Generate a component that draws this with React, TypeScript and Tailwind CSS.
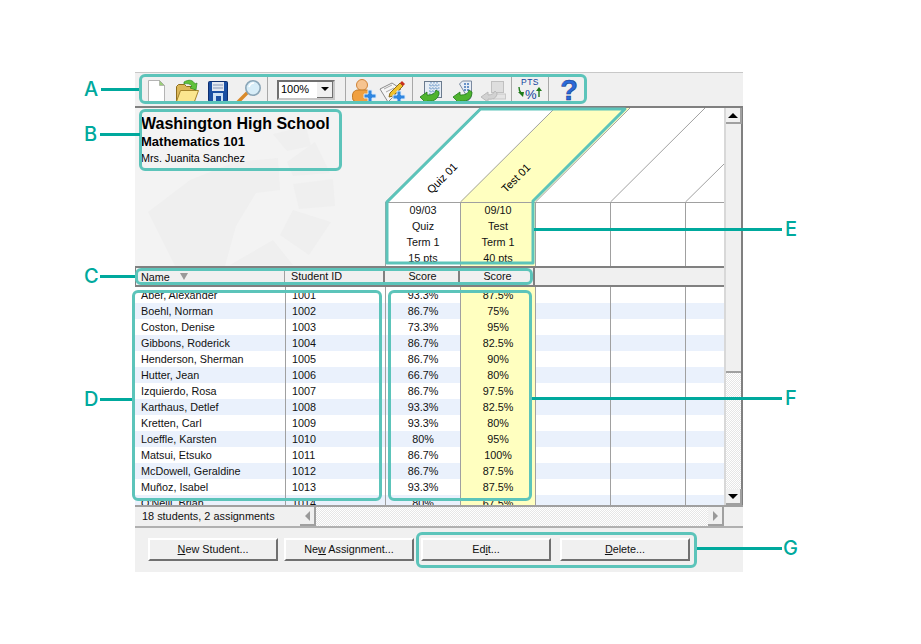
import React from "react";

const students = [
  ["Aber, Alexander", "1001", "93.3%", "87.5%"],
  ["Boehl, Norman", "1002", "86.7%", "75%"],
  ["Coston, Denise", "1003", "73.3%", "95%"],
  ["Gibbons, Roderick", "1004", "86.7%", "82.5%"],
  ["Henderson, Sherman", "1005", "86.7%", "90%"],
  ["Hutter, Jean", "1006", "66.7%", "80%"],
  ["Izquierdo, Rosa", "1007", "86.7%", "97.5%"],
  ["Karthaus, Detlef", "1008", "93.3%", "82.5%"],
  ["Kretten, Carl", "1009", "93.3%", "80%"],
  ["Loeffle, Karsten", "1010", "80%", "95%"],
  ["Matsui, Etsuko", "1011", "86.7%", "100%"],
  ["McDowell, Geraldine", "1012", "86.7%", "87.5%"],
  ["Muñoz, Isabel", "1013", "93.3%", "87.5%"],
  ["O'Neill, Brian", "1014", "80%", "67.5%"],
];

function Sep() {
  return <div className="h-[28px] w-[2px] shrink-0 border-l border-[#a8a8a8]" />;
}

function IconSlot({ w, children }: { w: number; children: React.ReactNode }) {
  return (
    <svg width={w} height={28} viewBox={`0 0 ${w} 28`} className="shrink-0">
      {children}
    </svg>
  );
}

function Plus({ x, y }: { x: number; y: number }) {
  return (
    <path
      d={`M${x - 2} ${y - 6}h4v4h4v4h-4v4h-4v-4h-4v-4h4z`}
      fill="#2f86e0"
      stroke="#dcebfa"
      strokeWidth="1"
    />
  );
}

function GreenArrow({ x, y }: { x: number; y: number }) {
  return (
    <g transform={`translate(${x} ${y})`}>
      <path
        d="M0 7l7-5v3c5 0 8-1 9-5l3 2c0 6-4 10-12 9v3z"
        fill="#4fb32e"
        stroke="#1f7a1a"
        strokeWidth="0.8"
      />
    </g>
  );
}

function Toolbar() {
  return (
    <div className="flex h-[34px] items-center border-t border-[#c8c8c8] bg-[#f0f0f0]">
      <div className="flex w-[132px] shrink-0 items-center pl-[8px]">
        <IconSlot w={122}>
          <path d="M5.5 4.5h11l5 5v17h-16z" fill="#fff" stroke="#b4b4b4" />
          <path d="M16.5 4.5v5h5z" fill="#9ccf7a" stroke="#a0a0a0" strokeWidth="0.6" />
          <path d="M33.5 10.5l2-2h6l2 2h8v15h-18z" fill="#dcb858" stroke="#8e6d1c" />
          <path d="M33.5 25.5l4-11h18l-4 11z" fill="#fbe68f" stroke="#a5842c" />
          <path d="M41 6c5-3 9-2 11 2l2-1-1 7-6-2 2-2c-2-2-4-3-8-2z" fill="#5fc23a" stroke="#2d8a22" strokeWidth="0.7" />
          <rect x="65.5" y="5.5" width="19" height="20" rx="1" fill="#1b4fa3" stroke="#0f2f70" />
          <rect x="69" y="6" width="12" height="9" fill="#e4e8f0" />
          <path d="M70 9h10M70 12h10" stroke="#8798b8" />
          <rect x="70" y="17" width="10" height="8.5" fill="#cfe2f6" />
          <rect x="73" y="20" width="5" height="5.5" fill="#1b4fa3" />
          <path d="M95.5 25.5l9-9" stroke="#d98a2b" strokeWidth="3.4" strokeLinecap="round" />
          <circle cx="110" cy="12" r="7.2" fill="#d7edf8" stroke="#8aa6b8" strokeWidth="1.6" />
          <path d="M106 11c1-3 3-4 5-4" stroke="#fff" strokeWidth="1.5" fill="none" />
        </IconSlot>
      </div>
      <Sep />
      <div className="ml-[8px] mr-[10px] flex h-[20px] w-[58px] shrink-0 items-center border-2 border-b-[#c8c8c8] border-l-[#707070] border-r-[#c8c8c8] border-t-[#707070] bg-white pl-[2px] text-[11px]">
        <span className="flex-1">100%</span>
        <span className="flex h-[16px] w-[16px] items-center justify-center border-b border-r border-[#707070] bg-[#f0f0f0]">
          <span className="h-0 w-0 border-x-[4px] border-t-[4px] border-x-transparent border-t-black" />
        </span>
      </div>
      <Sep />
      <div className="w-[65px] shrink-0">
        <IconSlot w={65}>
          <circle cx="15" cy="9" r="5.5" fill="#f6c490" stroke="#d08336" />
          <path d="M6 24c-2-8 2-10 5-10h8c3 0 6 2 6 6l-2 6H9z" fill="#f0a040" stroke="#c27a26" />
          <Plus x={23} y={20} />
          <path d="M33 13l12-6 9 6-13 13z" fill="#f6f6f6" stroke="#8a8a8a" />
          <path d="M37 13l8-4M39 16l8-4M42 19l6-3" stroke="#a8a8a8" />
          <path d="M43 17l10-10 3 3-10 10-4 1z" fill="#f0c22e" stroke="#8e6d1c" />
          <path d="M53 7l2-2 3 3-2 2z" fill="#c9301f" />
          <Plus x={52} y={21} />
        </IconSlot>
      </div>
      <Sep />
      <div className="w-[97px] shrink-0">
        <IconSlot w={97}>
          <rect x="10.5" y="5.5" width="17" height="16" fill="#e6edf5" stroke="#6b7b8e" />
          <path d="M15 9h12M15 12h12M15 15h12M15 18h12M17 6v15M20 6v15M23 6v15" stroke="#5f8fc4" strokeDasharray="1.5 1.5" />
          <GreenArrow x={6} y={14} />
          <path d="M45.5 8l3-3h9v13c0 4-2 7-6 7h-3c2-2 3-4 3-7z" fill="#e8eef6" stroke="#7b8aa0" />
          <path d="M50 8h5M50 11h5M50 14h5" stroke="#3e74b8" strokeWidth="1.5" strokeDasharray="2 1" />
          <GreenArrow x={39} y={14} />
          <rect x="77.5" y="5.5" width="12" height="11" fill="#dedede" stroke="#c0c0c0" />
          <rect x="79.5" y="18" width="12" height="5" fill="#e4e4e4" stroke="#c8c8c8" />
          <path d="M67 21l7-5v3c4 0 6-2 7-4l2 2c0 4-3 7-9 6v3z" fill="#d2d2d2" stroke="#bababa" />
        </IconSlot>
      </div>
      <Sep />
      <div className="relative h-[28px] w-[35px] shrink-0">
        <span className="absolute left-[8px] top-[1px] text-[8.5px] leading-[10px] tracking-[0.5px] text-[#0f3f9c]">PTS</span>
        <span className="absolute left-[12px] top-[13px] text-[13px] leading-[12px] text-[#0f3f9c]">%</span>
        <svg width="35" height="28" viewBox="0 0 35 28" className="absolute left-0 top-0">
          <path d="M6 11c0 3 1 5 2 6" stroke="#1f7a1a" strokeWidth="1.4" fill="none" />
          <path d="M5 16h6l-1 5z" fill="#1f7a1a" />
          <path d="M26 21v-7" stroke="#1f7a1a" strokeWidth="1.4" fill="none" />
          <path d="M23 15l3-4 3 4z" fill="#1f7a1a" />
        </svg>
      </div>
      <Sep />
      <div className="relative h-[28px] w-[36px] shrink-0">
        <span className="absolute inset-0 pl-[2px] text-center text-[29px] font-bold leading-[28px] text-[#2a6ad8] [-webkit-text-stroke:0.5px_#0d2f80]">?</span>
      </div>
    </div>
  );
}

function Diagonals() {
  return (
    <svg width="339" height="94" viewBox="0 0 339 94" className="absolute left-0 top-0">
      <polygon points="0,94 95,0 339,0 339,94" fill="#fff" />
      <polygon points="75,94 170,0 245,0 150,94" fill="#ffffc0" />
      <path d="M0.5 94L95 0M75.5 94L170 0M150.5 94L245 0M225.5 94L320 0M300.5 94L339 56" stroke="#a0a0a0" fill="none" />
    </svg>
  );
}

function Row({ data, i }: { data: string[]; i: number }) {
  const odd = i % 2 === 1;
  const bg = odd ? "bg-[#eaf1fc]" : "bg-white";
  return (
    <div className={`flex h-[16px] shrink-0 text-[10.8px] leading-[16px] text-[#111] ${bg}`}>
      <div className="w-[150px] shrink-0 pl-[6px]">{data[0]}</div>
      <div className="w-[100px] shrink-0 border-l border-[#a0a0a0] pl-[6px]">{data[1]}</div>
      <div className="w-[75px] shrink-0 border-l border-[#a0a0a0] text-center">{data[2]}</div>
      <div className="w-[75px] shrink-0 border-l border-[#a0a0a0] bg-[#ffffc0] text-center">{data[3]}</div>
      <div className="w-[75px] shrink-0 border-l border-[#a0a0a0]" />
      <div className="w-[75px] shrink-0 border-l border-[#a0a0a0]" />
      <div className="flex-1 border-l border-[#a0a0a0]" />
    </div>
  );
}

function InfoCell({ lines, yellow }: { lines: string[]; yellow?: boolean }) {
  return (
    <div className={`w-[75px] shrink-0 border-l border-[#a0a0a0] text-center text-[10.8px] leading-[14px] text-[#111] ${yellow ? "bg-[#ffffc0]" : "bg-white"}`}>
      {lines.map((l) => (
        <div key={l} className="h-[16px]">
          {l}
        </div>
      ))}
    </div>
  );
}

function GradeGrid() {
  return (
    <div className="flex h-[397px] w-[589px] shrink-0 flex-col overflow-hidden">
      <div className="flex h-[158px] shrink-0">
        <div className="relative w-[250px] shrink-0 overflow-hidden bg-[#f3f3f3] pl-[6px] pt-[7px] text-black">
          <svg width="250" height="158" viewBox="0 0 250 158" className="absolute left-0 top-0">
            <g fill="#efefef">
              <path d="M13 104l42-32 45-18 43-4 2 32-24 3-20 33-11 40H40z" />
              <path d="M138 26l33-8 5 20-24 5z" />
              <path d="M152 54l28-20 15 31-37 3z" />
              <path d="M158 76l40-5 2 27-36 3z" />
              <path d="M145 127l13-25 38 12-22 33z" />
              <path d="M95 157l43-25 20 25z" />
            </g>
          </svg>
          <div className="relative text-[16px] font-bold leading-[18px]">Washington High School</div>
          <div className="relative text-[13px] font-bold leading-[18px]">Mathematics 101</div>
          <div className="relative text-[10.8px] leading-[14px]">Mrs. Juanita Sanchez</div>
        </div>
        <div className="relative flex-1 bg-[#f3f3f3]">
          <Diagonals />
          <span className="absolute left-[38px] top-[63px] -rotate-45 text-[11px] leading-[14px] text-black">Quiz 01</span>
          <span className="absolute left-[113px] top-[63px] -rotate-45 text-[11px] leading-[14px] text-black">Test 01</span>
          <div className="absolute bottom-0 left-0 right-0 top-[94px] flex border-t border-[#a0a0a0] bg-white">
            <InfoCell lines={["09/03", "Quiz", "Term 1", "15 pts"]} />
            <InfoCell yellow lines={["09/10", "Test", "Term 1", "40 pts"]} />
            <div className="w-[75px] shrink-0 border-l border-[#a0a0a0]" />
            <div className="w-[75px] shrink-0 border-l border-[#a0a0a0]" />
            <div className="flex-1 border-l border-[#a0a0a0]" />
          </div>
        </div>
      </div>
      <div className="flex h-[21px] shrink-0 border-y-2 border-[#808080] bg-[#f0f0f0] text-[10.8px] leading-[16px] text-[#111]">
        <div className="flex w-[150px] shrink-0 items-center gap-[10px] border-x border-l-[#808080] border-r-[#a0a0a0] pl-[5px]">
          <span>Name</span>
          <span className="h-0 w-0 border-x-[4px] border-t-[7px] border-x-transparent border-t-[#999]" />
        </div>
        <div className="w-[100px] shrink-0 border-r-2 border-[#808080] pl-[6px]">Student ID</div>
        <div className="w-[75px] shrink-0 border-r-2 border-[#808080] pl-[2px] text-center">Score</div>
        <div className="w-[75px] shrink-0 border-r-2 border-[#808080] pl-[2px] text-center">Score</div>
      </div>
      {students.map((s, i) => (
        <Row key={s[1]} data={s} i={i} />
      ))}
    </div>
  );
}

function ScrollBtn({ dir, tall }: { dir: "up" | "down" | "left" | "right"; tall?: boolean }) {
  const arrow = {
    up: "border-x-[5px] border-b-[5px] border-x-transparent border-b-black",
    down: "border-x-[5px] border-t-[5px] border-x-transparent border-t-black",
    left: "border-y-[5px] border-r-[5px] border-y-transparent border-r-[#999]",
    right: "border-y-[5px] border-l-[5px] border-y-transparent border-l-[#999]",
  }[dir];
  return (
    <div className={`flex w-[16px] shrink-0 items-center justify-center border-b-2 border-r-2 border-[#a0a0a0] bg-[#f0f0f0] ${tall ? "h-full" : "h-[16px]"}`}>
      <span className={`h-0 w-0 ${arrow}`} />
    </div>
  );
}

function AppButton({ children, w }: { children: React.ReactNode; w: string }) {
  return (
    <div className={`flex h-[23px] shrink-0 items-center justify-center border-2 border-b-[#707070] border-l-white border-r-[#707070] border-t-white bg-[#f0f0f0] text-[10.8px] text-[#111] ${w}`}>
      <span>{children}</span>
    </div>
  );
}

function Callouts() {
  const box = "pointer-events-none absolute rounded-[6px] border-[3px] border-[#5cc4ba]";
  const line = "absolute h-[3px] bg-[#00a99d]";
  const label = "absolute font-['Inter',sans-serif] text-[20px] font-medium leading-[24px] text-[#00a99d]";
  return (
    <>
      <div className={`${box} left-[139px] top-[74px] h-[30px] w-[448px]`} />
      <div className={`${box} left-[139px] top-[109px] h-[62px] w-[203px]`} />
      <div className={`${box} left-[135px] top-[268px] h-[17px] w-[398px]`} />
      <div className={`${box} left-[132px] top-[290px] h-[211px] w-[250px]`} />
      <div className={`${box} left-[388px] top-[290px] h-[211px] w-[144px]`} />
      <div className={`${box} left-[416px] top-[532px] h-[36px] w-[281px]`} />
      <svg width="921" height="644" viewBox="0 0 921 644" className="pointer-events-none absolute left-0 top-0">
        <polygon points="387,263 387,202 480.5,109 625,109 533,201 533,263" fill="none" stroke="#5cc4ba" strokeWidth="3" strokeLinejoin="round" />
      </svg>
      <div className={`${line} left-[101px] top-[88px] w-[38px]`} />
      <div className={`${line} left-[100px] top-[133px] w-[40px]`} />
      <div className={`${line} left-[100px] top-[275px] w-[35px]`} />
      <div className={`${line} left-[100px] top-[398px] w-[32px]`} />
      <div className={`${line} left-[534px] top-[228px] w-[248px]`} />
      <div className={`${line} left-[532px] top-[397px] w-[250px]`} />
      <div className={`${line} left-[697px] top-[547px] w-[85px]`} />
      <span className={`${label} left-[84px] top-[77px]`}>A</span>
      <span className={`${label} left-[84px] top-[122px]`}>B</span>
      <span className={`${label} left-[84px] top-[264px]`}>C</span>
      <span className={`${label} left-[84px] top-[387px]`}>D</span>
      <span className={`${label} left-[785px] top-[217px]`}>E</span>
      <span className={`${label} left-[785px] top-[386px]`}>F</span>
      <span className={`${label} left-[783px] top-[536px]`}>G</span>
    </>
  );
}

export default function App() {
  const dither = "bg-[conic-gradient(#fff_25%,#e6e6e6_0_50%,#fff_0_75%,#e6e6e6_0)] bg-[length:2px_2px]";
  return (
    <div className="relative h-[644px] w-[921px] overflow-hidden bg-white pl-[135px] pt-[72px] font-['Liberation_Sans',sans-serif]">
      <div className="flex h-[500px] w-[608px] flex-col bg-[#f0f0f0]">
        <Toolbar />
        <div className="h-[2px] shrink-0 bg-[#808080]" />
        <div className="flex h-[397px] shrink-0">
          <GradeGrid />
          <div className="flex w-[19px] flex-col border-x-2 border-l-[#d8d8d8] border-r-[#808080]">
            <ScrollBtn dir="up" />
            <div className="h-[249px] shrink-0 border-b-2 border-[#a0a0a0] bg-[#f0f0f0]" />
            <div className={`flex-1 ${dither}`} />
            <ScrollBtn dir="down" />
          </div>
        </div>
        <div className="flex h-[21px] shrink-0 items-center border-t-2 border-[#a0a0a0] text-[10.9px] text-[#111]">
          <div className="w-[165px] shrink-0 pl-[7px]">18 students, 2 assignments</div>
          <ScrollBtn dir="left" tall />
          <div className={`h-full w-[392px] ${dither}`} />
          <ScrollBtn dir="right" tall />
        </div>
        <div className="flex flex-1 items-start border-t-2 border-[#b0b0b0] pl-[13px] pt-[10px]">
          <AppButton w="w-[130px]"><u>N</u>ew Student...</AppButton>
          <div className="ml-[6px]">
            <AppButton w="w-[130px]">Ne<u>w</u> Assignment...</AppButton>
          </div>
          <div className="ml-[7px]">
            <AppButton w="w-[130px]">Ed<u>i</u>t...</AppButton>
          </div>
          <div className="ml-[9px]">
            <AppButton w="w-[130px]"><u>D</u>elete...</AppButton>
          </div>
        </div>
      </div>
      <Callouts />
    </div>
  );
}
